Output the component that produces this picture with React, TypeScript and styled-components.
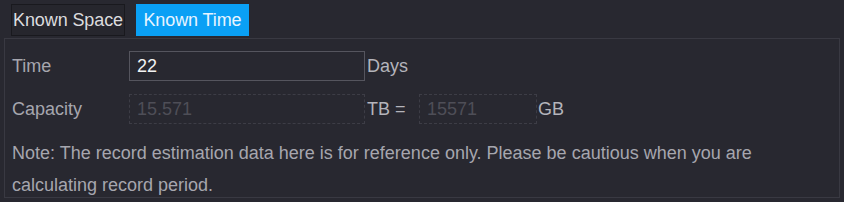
import React from "react";
import styled, { createGlobalStyle } from "styled-components";

const Global = createGlobalStyle`
  html, body { margin: 0; padding: 0; background: #282830; }
  body { font-family: "Liberation Sans", Arial, sans-serif; }
`;

const Page = styled.div`
  width: 844px;
  height: 202px;
  background: #282830;
  box-sizing: border-box;
  padding: 4px 5px 0 4px;
  display: flex;
  flex-direction: column;
`;

const Tabs = styled.div`
  display: flex;
  gap: 11px;
  padding-left: 7px;
  height: 34px;
`;

const Tab = styled.button<{ $active?: boolean }>`
  height: 32px;
  box-sizing: border-box;
  padding: 0;
  margin: 0;
  border: 1px solid ${(p) => (p.$active ? "#0aa0f5" : "#19191e")};
  background: ${(p) => (p.$active ? "#0aa0f5" : "#26262d")};
  color: ${(p) => (p.$active ? "#e8f4ff" : "#dcdcdf")};
  font-family: "Liberation Sans", Arial, sans-serif;
  font-size: 18px;
  letter-spacing: -0.1px;
  line-height: 1;
  white-space: nowrap;
  display: flex;
  align-items: center;
  justify-content: center;
  width: ${(p) => (p.$active ? "113px" : "114px")};
`;

const Panel = styled.div`
  width: 836px;
  height: 160px;
  box-sizing: border-box;
  border: 1px solid #393942;
  padding: 12px 7px 0 7px;
  display: flex;
  flex-direction: column;
`;

const Row = styled.div`
  display: flex;
  align-items: center;
  height: 30px;
  margin-bottom: 13px;
`;

const Label = styled.div`
  width: 117px;
  color: #a6a6ae;
  font-size: 18px;
`;

const Input = styled.div<{ $w: number; $disabled?: boolean }>`
  width: ${(p) => p.$w}px;
  height: 30px;
  box-sizing: border-box;
  border: 1px ${(p) => (p.$disabled ? "dashed #3d3d46" : "solid #55555e")};
  color: ${(p) => (p.$disabled ? "#4e4e57" : "#f2f2f2")};
  font-size: 18px;
  display: flex;
  align-items: center;
  padding-left: 7px;
`;

const Unit = styled.div<{ $w?: number; $gap?: number }>`
  color: #b4b4bb;
  font-size: 18px;
  margin-left: ${(p) => p.$gap ?? 3}px;
  width: ${(p) => (p.$w ? `${p.$w}px` : "auto")};
`;

const Note = styled.div`
  color: #a6a6ae;
  font-size: 18px;
  line-height: 32px;
  margin-top: 0;
`;

export default function App() {
  return (
    <>
      <Global />
      <Page>
        <Tabs>
          <Tab>Known Space</Tab>
          <Tab $active>Known Time</Tab>
        </Tabs>
        <Panel>
          <Row>
            <Label>Time</Label>
            <Input $w={236}>22</Input>
            <Unit $gap={2}>Days</Unit>
          </Row>
          <Row>
            <Label>Capacity</Label>
            <Input $w={236} $disabled>15.571</Input>
            <Unit $gap={2} $w={52}>TB =</Unit>
            <Input $w={118} $disabled>15571</Input>
            <Unit $gap={1}>GB</Unit>
          </Row>
          <Note>
            Note: The record estimation data here is for reference only. Please be cautious when you are
            <br />
            calculating record period.
          </Note>
        </Panel>
      </Page>
    </>
  );
}
